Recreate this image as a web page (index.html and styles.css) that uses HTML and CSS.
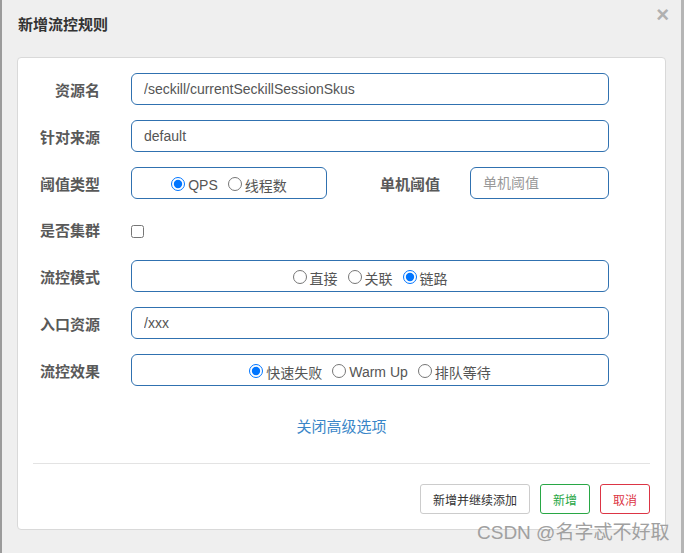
FILE: index.html
```html
<!DOCTYPE html>
<html lang="zh">
<head>
<meta charset="utf-8">
<title>新增流控规则</title>
<link rel="stylesheet" href="styles.css">
</head>
<body>
<div class="header">
  <h4 class="title">新增流控规则</h4>
  <span class="close">×</span>
</div>
<div class="panel">
  <form class="form">
    <div class="row">
      <label class="lbl">资源名</label>
      <input class="ctrl" type="text" value="/seckill/currentSeckillSessionSkus">
    </div>
    <div class="row">
      <label class="lbl">针对来源</label>
      <input class="ctrl" type="text" value="default">
    </div>
    <div class="row">
      <label class="lbl">阈值类型</label>
      <div class="ctrl radios short">
        <label class="opt"><input type="radio" name="grade" checked>QPS</label>
        <label class="opt"><input type="radio" name="grade">线程数</label>
      </div>
      <label class="lbl lbl2">单机阈值</label>
      <input class="ctrl small" type="text" placeholder="单机阈值">
    </div>
    <div class="row row-check">
      <label class="lbl">是否集群</label>
      <input class="check" type="checkbox">
    </div>
    <div class="row">
      <label class="lbl">流控模式</label>
      <div class="ctrl radios">
        <label class="opt"><input type="radio" name="mode">直接</label>
        <label class="opt"><input type="radio" name="mode">关联</label>
        <label class="opt"><input type="radio" name="mode" checked>链路</label>
      </div>
    </div>
    <div class="row">
      <label class="lbl">入口资源</label>
      <input class="ctrl" type="text" value="/xxx">
    </div>
    <div class="row">
      <label class="lbl">流控效果</label>
      <div class="ctrl radios">
        <label class="opt"><input type="radio" name="effect" checked>快速失败</label>
        <label class="opt"><input type="radio" name="effect">Warm Up</label>
        <label class="opt"><input type="radio" name="effect">排队等待</label>
      </div>
    </div>
  </form>
  <div class="more">关闭高级选项</div>
  <div class="divider"></div>
  <div class="footer">
    <button class="btn">新增并继续添加</button>
    <button class="btn btn-ok">新增</button>
    <button class="btn btn-cancel">取消</button>
  </div>
</div>
<div class="watermark">CSDN @名字忒不好取</div>
</body>
</html>
```
FILE: styles.css
```css
html, body {
  margin: 0;
  padding: 0;
}
body {
  position: relative;
  box-sizing: border-box;
  height: 553px;
  overflow: hidden;
  background: #efefef;
  border-left: 2px solid #9b9b9b;
  border-right: 3px solid #b5b5b5;
  font-family: "Liberation Sans", "Noto Sans CJK SC", sans-serif;
}
.header {
  display: flex;
  justify-content: space-between;
  align-items: flex-start;
  height: 57px;
  padding: 0 12px 0 16px;
  box-sizing: border-box;
}
.title {
  margin: 0;
  padding-top: 15px;
  font-size: 15px;
  line-height: 20px;
  font-weight: bold;
  color: #333;
}
.close {
  padding-top: 4px;
  font-size: 22px;
  line-height: 22px;
  font-weight: bold;
  color: #b0b0b0;
}
.panel {
  margin: 0 15px;
  padding: 15px;
  background: #fff;
  border: 1px solid #d9d9d9;
  border-radius: 4px;
}
.form {
  margin: 0;
}
.row {
  display: flex;
  align-items: center;
  height: 32px;
  margin-bottom: 15px;
}
.row:last-child {
  margin-bottom: 0;
}
.row-check {
  height: 31px;
}
.lbl {
  flex: none;
  width: 67px;
  margin-right: 31px;
  text-align: right;
  font-size: 15px;
  font-weight: bold;
  color: #595959;
  white-space: nowrap;
}
.lbl2 {
  width: 113px;
  margin-right: 30px;
}
.ctrl {
  flex: none;
  box-sizing: border-box;
  width: 478px;
  height: 32px;
  margin: 0;
  padding: 0 12px;
  border: 1px solid #3071b0;
  border-radius: 6px;
  background: #fff;
  font-family: "Liberation Sans", "Noto Sans CJK SC", sans-serif;
  font-size: 14px;
  color: #555;
  outline: none;
}
.ctrl::placeholder {
  color: #999;
}
.short {
  width: 196px;
}
.small {
  width: 139px;
}
.radios {
  display: flex;
  justify-content: center;
  align-items: center;
  padding-top: 3px;
}
.opt {
  display: inline-flex;
  align-items: center;
  margin: 0 5px;
  font-size: 14px;
  color: #555;
  white-space: nowrap;
}
.opt input {
  width: 14px;
  height: 14px;
  margin: 0 3px 1px 0;
}
.check {
  width: 13px;
  height: 13px;
  margin: 4px 0 0 0;
}
.more {
  margin-top: 31px;
  text-align: center;
  font-size: 15px;
  line-height: 20px;
  color: #3a86c8;
}
.divider {
  margin-top: 26px;
  border-top: 1px solid #e3e3e3;
}
.footer {
  display: flex;
  justify-content: flex-end;
  gap: 10px;
  margin-top: 20px;
}
.btn {
  height: 30px;
  padding: 0 12px;
  background: #fff;
  border: 1px solid #ccc;
  border-radius: 3px;
  font-family: "Liberation Sans", "Noto Sans CJK SC", sans-serif;
  font-size: 12px;
  color: #333;
}
.btn-ok {
  border-color: #28a745;
  color: #28a745;
}
.btn-cancel {
  border-color: #dc3545;
  color: #dc3545;
}
.watermark {
  position: absolute;
  left: 475px;
  top: 521px;
  font-size: 19px;
  line-height: 24px;
  color: #a0a0a0;
  white-space: nowrap;
}
```
